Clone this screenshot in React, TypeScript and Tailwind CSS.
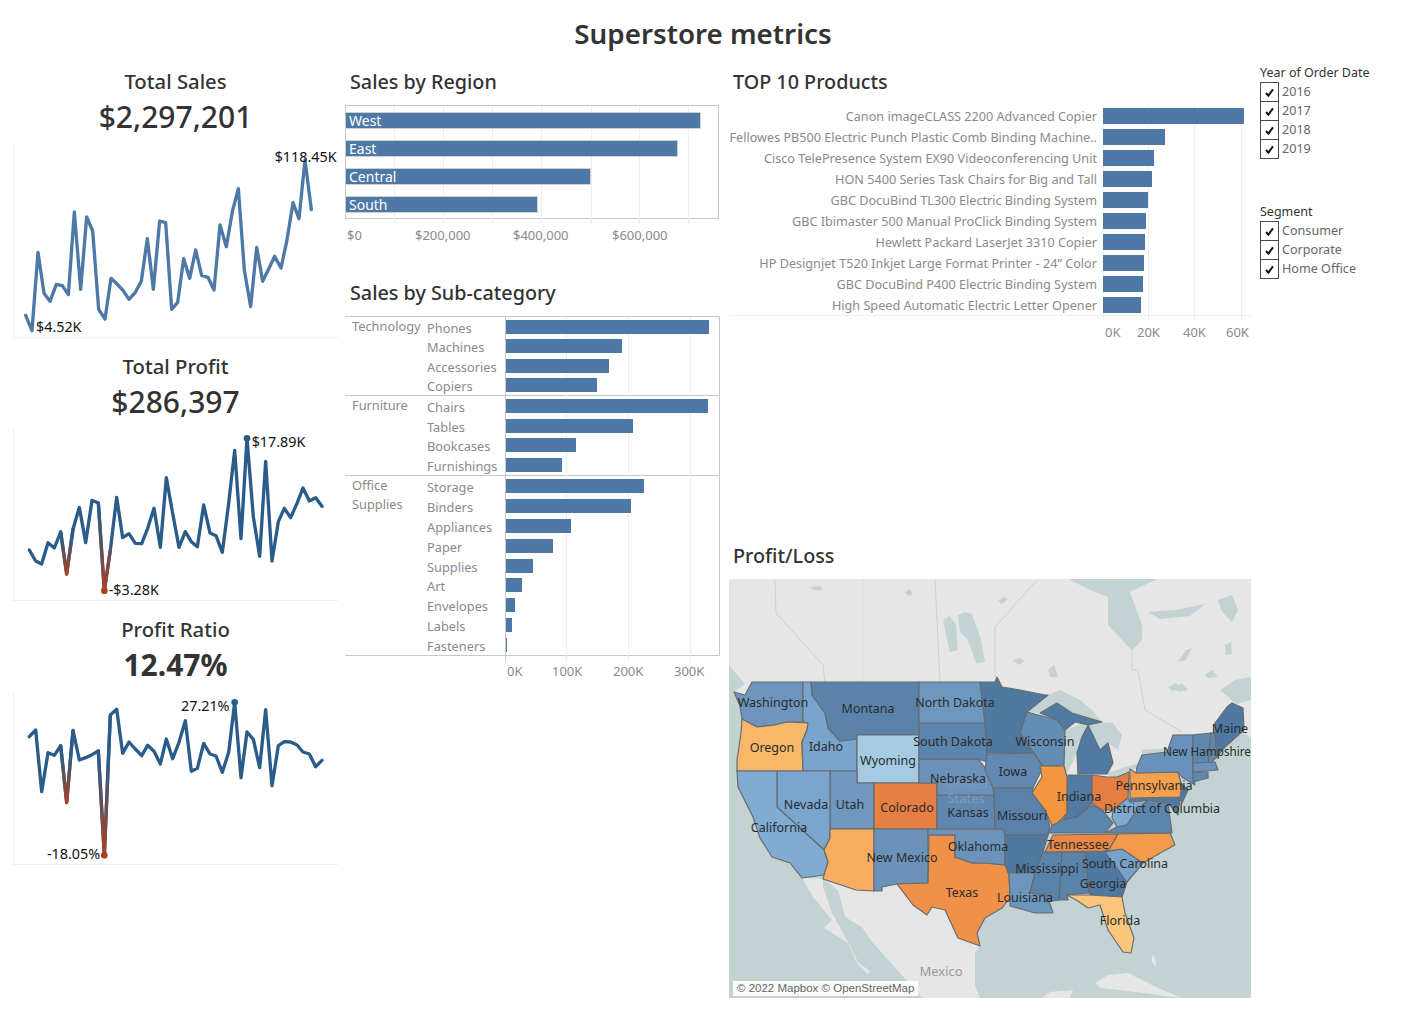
/*
 * Superstore metrics dashboard
 * KPI sparklines on the left, bar charts in the middle, top products + profit map on the right
 */

const FONT = "font-['Noto_Sans',sans-serif]";

const salesPts =
  "77,766 96,812 114,577 132,700 150,724 169,673 187,677 205,704 223,456 242,688 260,471 278,513 296,748 315,777 333,655 351,672 369,691 387,718 406,697 424,663 442,536 460,688 479,483 497,488 515,748 533,727 551,596 569,655 587,570 605,646 624,652 642,690 660,495 679,560 697,455 715,386 733,630 752,740 770,562 788,664 806,627 824,589 843,624 860,545 879,428 897,476 915,300 934,449";
const profitPts =
  "88,600 107,633 125,642 144,578 163,594 182,546 200,672 219,538 238,472 257,578 276,451 295,459 313,722 331,600 350,442 368,563 387,551 406,580 425,581 443,535 462,475 481,592 499,383 518,490 537,592 556,545 574,575 592,590 611,465 630,549 648,557 667,607 686,460 704,301 723,566 741,265 760,500 779,619 797,334 816,633 835,515 853,475 872,503 891,460 909,414 928,453 947,443 966,469";
const ratioPts =
  "88,380 107,360 125,545 144,428 163,436 182,407 200,578 219,361 238,450 257,443 276,434 295,423 313,736 331,315 350,298 368,430 387,396 406,417 425,437 443,406 462,424 481,462 499,387 518,446 537,397 556,332 574,484 592,475 611,400 630,432 648,438 667,487 686,427 704,277 723,503 741,366 760,388 779,473 797,299 816,527 835,407 853,395 872,396 891,405 909,426 928,432 947,470 966,451";

type Dip = { id: string; pts: string; top: number; bottom: number };
type Note = { x: number; y: number; text: string };
type Dot = { x: number; y: number; color: string };

function Sparkline(props: {
  top: number;
  height: number;
  pts: string;
  color: string;
  notes: Note[];
  dips?: Dip[];
  dots?: Dot[];
}) {
  return (
    <div className="w-[325px] border-b border-l border-[#f0f0f0]" style={{ height: props.height }}>
      <svg
        className="block overflow-visible"
        width="324"
        height={props.height - 1}
        viewBox={`42 ${props.top} 972 ${(props.height - 1) * 3}`}
      >
        <defs>
          {props.dips?.map((d) => (
            <linearGradient key={d.id} id={d.id} gradientUnits="userSpaceOnUse" x1="0" x2="0" y1={d.top} y2={d.bottom}>
              <stop offset="0" stopColor={props.color} />
              <stop offset="1" stopColor="#a9411f" />
            </linearGradient>
          ))}
        </defs>
        <polyline points={props.pts} fill="none" stroke={props.color} strokeWidth="10" strokeLinejoin="round" strokeLinecap="round" />
        {props.dips?.map((d) => (
          <polyline key={d.id} points={d.pts} fill="none" stroke={`url(#${d.id})`} strokeWidth="10" strokeLinejoin="round" strokeLinecap="round" />
        ))}
        {props.dots?.map((d) => (
          <circle key={d.x} cx={d.x} cy={d.y} r="10" fill={d.color} />
        ))}
        {props.notes.map((n) => (
          <text key={n.text} x={n.x} y={n.y} fontSize="43" fill="#111">
            {n.text}
          </text>
        ))}
      </svg>
    </div>
  );
}

function Kpi(props: { title: string; value: string; bold?: boolean; chartGap: string; children: React.ReactNode }) {
  return (
    <div className="mb-[13px] flex flex-col items-center">
      <div className="flex h-[32px] items-center pb-[2px] text-[20.3px] font-medium text-[#333]">{props.title}</div>
      <div className={`flex h-[36px] items-center text-[30px] text-[#333] ${props.bold ? "font-bold" : "font-medium"}`}>
        {props.value}
      </div>
      <div className={props.chartGap}>{props.children}</div>
    </div>
  );
}

const regions = [
  { name: "West", w: 355 },
  { name: "East", w: 332 },
  { name: "Central", w: 245 },
  { name: "South", w: 192 },
];

const regionGrid = ["left-[48px]", "left-[97px]", "left-[146px]", "left-[195px]", "left-[245px]", "left-[293px]", "left-[342px]"];

const subGroups = [
  {
    cat: "Technology",
    h: "h-[78px]",
    rows: [
      { name: "Phones", w: 203 },
      { name: "Machines", w: 116 },
      { name: "Accessories", w: 103 },
      { name: "Copiers", w: 91 },
    ],
  },
  {
    cat: "Furniture",
    h: "h-[79px]",
    rows: [
      { name: "Chairs", w: 202 },
      { name: "Tables", w: 127 },
      { name: "Bookcases", w: 70 },
      { name: "Furnishings", w: 56 },
    ],
  },
  {
    cat: "Office Supplies",
    h: "h-[179px]",
    rows: [
      { name: "Storage", w: 138 },
      { name: "Binders", w: 125 },
      { name: "Appliances", w: 65 },
      { name: "Paper", w: 47 },
      { name: "Supplies", w: 27 },
      { name: "Art", w: 16 },
      { name: "Envelopes", w: 9 },
      { name: "Labels", w: 6 },
      { name: "Fasteners", w: 1 },
    ],
  },
];

const products = [
  { name: "Canon imageCLASS 2200 Advanced Copier", w: 141 },
  { name: "Fellowes PB500 Electric Punch Plastic Comb Binding Machine..", w: 62 },
  { name: "Cisco TelePresence System EX90 Videoconferencing Unit", w: 51 },
  { name: "HON 5400 Series Task Chairs for Big and Tall", w: 49 },
  { name: "GBC DocuBind TL300 Electric Binding System", w: 45 },
  { name: "GBC Ibimaster 500 Manual ProClick Binding System", w: 43 },
  { name: "Hewlett Packard LaserJet 3310 Copier", w: 42 },
  { name: "HP Designjet T520 Inkjet Large Format Printer - 24” Color", w: 41 },
  { name: "GBC DocuBind P400 Electric Binding System", w: 40 },
  { name: "High Speed Automatic Electric Letter Opener", w: 38 },
];

function FilterList(props: { title: string; items: string[] }) {
  return (
    <div>
      <div className="flex h-[18px] items-center text-[12.5px] text-[#333]">{props.title}</div>
      {props.items.map((item) => (
        <div key={item} className="flex h-[19px] items-start gap-[3px]">
          <div className="flex h-[20px] w-[19px] items-center justify-center border-[1.5px] border-[#4a4a4a]">
            <svg width="11" height="11" viewBox="0 0 11 11">
              <path d="M2 6 L4.4 8.6 L9 2.4" fill="none" stroke="#111" strokeWidth="2" />
            </svg>
          </div>
          <span className="text-[12.6px] leading-[19px] text-[#666]">{item}</span>
        </div>
      ))}
    </div>
  );
}

type State = { name: string; fill: string; pts: string };

const states: State[] = [
  { name: "WA", fill: "#6d95be", pts: "752,682 803,682 803,722 787,722 775,725 757,727 742,719 740,706 734,692 745,695" },
  { name: "OR", fill: "#f9b769", pts: "742,719 757,727 775,725 787,722 808,723 807,730 802,742 803,771 737,771 737,760 741,733" },
  { name: "ID", fill: "#78a4cd", pts: "803,682 811,682 812,695 825,713 828,728 840,741 857,739 857,771 803,771 802,742 807,730 808,723 803,722" },
  { name: "MT", fill: "#5a82ab", pts: "811,682 919,682 919,735 857,735 857,739 840,741 828,728 825,713 812,695" },
  { name: "WY", fill: "#a4cbe2", pts: "857,735 919,735 919,783 857,783" },
  { name: "UT", fill: "#6f97bf", pts: "830,771 857,771 857,783 874,783 874,829 830,829" },
  { name: "CO", fill: "#e77f45", pts: "874,783 937,783 937,829 874,829" },
  { name: "NV", fill: "#7aa5cf", pts: "777,771 830,771 830,838 824,850 777,807" },
  { name: "CA", fill: "#80abd3", pts: "737,771 777,771 777,807 824,850 828,862 824,875 802,878 790,863 772,857 760,838 753,817 738,787" },
  { name: "AZ", fill: "#f8ad60", pts: "830,829 874,829 874,891 856,890 823,879 824,875 828,862 824,850 830,838" },
  { name: "NM", fill: "#6a92ba", pts: "874,829 928,829 928,883 897,884 882,887 882,891 874,891" },
  { name: "TX", fill: "#f0914a", pts: "929,835 955,835 955,857 972,863 985,863 1005,865 1009,873 1010,898 1002,908 985,918 977,933 980,946 958,938 945,910 932,907 927,915 913,905 897,884 928,883" },
  { name: "OK", fill: "#6b93bb", pts: "928,829 1005,829 1005,865 985,863 972,863 955,857 955,835 928,835" },
  { name: "KS", fill: "#5f87b0", pts: "937,795 994,795 995,829 937,829" },
  { name: "NE", fill: "#6a92ba", pts: "919,759 978,759 987,770 994,783 994,795 937,795 937,783 919,783" },
  { name: "SD", fill: "#5b84ae", pts: "919,723 985,723 987,753 987,762 978,759 919,759" },
  { name: "ND", fill: "#6e97c0", pts: "919,682 980,682 985,723 919,723" },
  { name: "MN", fill: "#4f799f", pts: "980,682 995,682 997,677 1002,687 1020,690 1045,695 1048,695 1027,712 1020,733 1034,753 987,753 985,723" },
  { name: "IA", fill: "#6189b2", pts: "987,754 1034,753 1043,767 1033,788 993,788 985,770" },
  { name: "WI", fill: "#648db6", pts: "1027,712 1057,720 1065,730 1064,765 1043,766 1034,753 1020,733" },
  { name: "MI1", fill: "#4f7aa3", pts: "1040,713 1057,703 1072,713 1102,722 1088,725 1075,722 1065,730 1057,720" },
  { name: "MI2", fill: "#4f7aa3", pts: "1088,725 1100,750 1108,743 1113,763 1107,774 1078,774 1077,753 1082,737" },
  { name: "IL", fill: "#f4953f", pts: "1040,766 1064,766 1067,777 1067,813 1053,828 1045,810 1032,793 1042,777" },
  { name: "IN", fill: "#517ba3", pts: "1068,775 1092,775 1092,803 1077,817 1063,820 1067,813" },
  { name: "OH", fill: "#e67e44", pts: "1092,775 1107,777 1117,777 1129,772 1128,798 1113,810 1102,810 1092,803" },
  { name: "MO", fill: "#5981aa", pts: "993,788 1033,788 1032,793 1045,810 1050,827 1048,835 1005,835 1003,829 995,829 994,795" },
  { name: "AR", fill: "#4f799f", pts: "1005,835 1048,835 1043,852 1035,873 1008,873 1005,863" },
  { name: "LA", fill: "#6d96bf", pts: "1009,873 1035,873 1030,893 1047,895 1053,913 1035,913 1010,906 1010,898" },
  { name: "MS", fill: "#5a83ac", pts: "1043,852 1062,852 1059,900 1045,902 1047,895 1030,893 1035,873" },
  { name: "AL", fill: "#5a83ac", pts: "1062,852 1085,852 1089,893 1067,895 1068,900 1059,900" },
  { name: "GA", fill: "#4f79a2", pts: "1085,852 1105,851 1127,882 1122,897 1090,895" },
  { name: "SC", fill: "#76a2cb", pts: "1105,852 1122,849 1143,863 1127,882" },
  { name: "FL", fill: "#fcc57c", pts: "1067,895 1090,895 1122,897 1125,913 1134,938 1131,953 1123,952 1108,930 1100,905 1088,908 1078,901" },
  { name: "TN", fill: "#ec8846", pts: "1053,835 1118,834 1110,848 1105,851 1045,852" },
  { name: "NC", fill: "#f49a4d", pts: "1118,834 1170,833 1175,845 1162,852 1143,863 1122,849 1105,851 1110,848" },
  { name: "KY", fill: "#5d86af", pts: "1048,833 1053,825 1063,820 1077,817 1092,805 1102,810 1113,823 1105,833" },
  { name: "WV", fill: "#7ea9d1", pts: "1113,810 1128,798 1130,802 1148,800 1135,813 1127,825 1117,827 1112,818" },
  { name: "VA", fill: "#5d86af", pts: "1105,833 1117,827 1127,825 1135,813 1148,800 1168,803 1172,833" },
  { name: "MD", fill: "#4f79a2", pts: "1130,799 1180,797 1178,815 1168,803 1148,800 1130,802" },
  { name: "NJ", fill: "#4f79a2", pts: "1180,782 1188,790 1182,803 1178,797" },
  { name: "PA", fill: "#f5a04f", pts: "1130,769 1136,773 1178,772 1182,787 1180,797 1130,798" },
  { name: "NY", fill: "#6892bb", pts: "1137,767 1142,755 1167,752 1173,735 1193,735 1193,773 1195,785 1182,777 1178,772 1136,773" },
  { name: "VT", fill: "#5f88b1", pts: "1193,735 1211,733 1208,765 1193,765" },
  { name: "NH", fill: "#5f88b1", pts: "1211,733 1215,733 1217,757 1208,765" },
  { name: "MA", fill: "#6892bb", pts: "1193,763 1215,762 1218,770 1193,772" },
  { name: "CT", fill: "#5f88b1", pts: "1193,772 1208,772 1208,778 1193,782" },
  { name: "ME", fill: "#4f79a2", pts: "1215,732 1215,723 1227,707 1232,703 1243,708 1244,730 1225,747 1217,757" },
];

const stateLabels: [string, number, number][] = [
  ["Washington", 773, 707],
  ["Montana", 868, 713],
  ["North Dakota", 955, 707],
  ["Oregon", 772, 752],
  ["Idaho", 826, 751],
  ["Wyoming", 888, 765],
  ["South Dakota", 953, 746],
  ["Wisconsin", 1045, 746],
  ["Maine", 1230, 733],
  ["New Hampshire", 1207, 756],
  ["Iowa", 1013, 776],
  ["Nebraska", 958, 783],
  ["Pennsylvania", 1154, 790],
  ["Indiana", 1079, 801],
  ["Nevada", 806, 809],
  ["Utah", 850, 809],
  ["Colorado", 907, 812],
  ["District of Columbia", 1162, 813],
  ["Kansas", 968, 817],
  ["Missouri", 1022, 820],
  ["California", 779, 832],
  ["Oklahoma", 978, 851],
  ["Tennessee", 1078, 849],
  ["New Mexico", 902, 862],
  ["South Carolina", 1125, 868],
  ["Mississippi", 1047, 873],
  ["Georgia", 1103, 888],
  ["Texas", 962, 897],
  ["Louisiana", 1025, 902],
  ["Florida", 1120, 925],
];

const waterShapes = [
  "1068,579 1157,579 1130,592 1142,625 1142,640 1132,650 1122,640 1108,625 1108,597 1090,590",
  "958,615 965,612 972,614 981,640 985,662 976,663 968,640 960,632",
  "943,620 950,616 956,625 958,650 950,652 946,635",
  "1148,612 1175,610 1205,604 1190,616 1160,619",
  "1218,600 1232,595 1238,610 1232,622 1222,612",
  "1178,662 1186,650 1192,648 1186,660",
  "1225,645 1231,642 1232,654 1226,655",
  "1048,670 1054,665 1058,677 1050,677",
  "1168,687 1176,683 1182,689 1172,691",
  "1205,675 1212,670 1218,677 1208,678",
  "1220,690 1235,680 1251,677 1251,700 1236,704",
  "905,592 910,589 913,594 908,596",
  "998,601 1004,597 1008,599 1002,604",
  "810,587 820,586 822,590 813,590",
  "1013,660 1020,658 1025,661 1019,665",
  "1175,688 1182,683 1188,690 1178,692",
  "1027,712 1048,695 1060,690 1080,700 1092,710 1102,722 1072,713 1057,703 1040,713",
  "1065,730 1087,722 1077,753 1067,773 1064,765",
  "1088,725 1102,722 1113,723 1122,735 1118,750 1108,743 1100,750",
  "1107,773 1142,762 1137,768 1112,778",
  "1142,750 1167,748 1165,753 1142,755",
];

function UsMap() {
  return (
    <div className="relative h-[419px] w-[522px] bg-[#c3d3d3]">
      <svg className="block" width="522" height="419" viewBox="729 579 522 419">
        {/* Canada */}
        <polygon
          points="729,579 1251,579 1251,738 1235,725 1215,732 1173,735 1167,752 1142,755 1136,773 1100,790 1000,800 757,727 734,692 745,684 729,665"
          fill="#e6e6e6"
        />
        {/* Mexico */}
        <polygon
          points="823,879 856,890 874,891 882,891 882,887 897,884 913,905 927,915 932,907 945,910 958,938 980,946 975,953 975,985 980,998 922,998 908,982 873,943 862,927 845,917 838,890"
          fill="#e6e6e6"
        />
        <polygon
          points="802,878 823,879 823,887 832,913 847,940 858,962 871,972 867,974 857,963 848,943 824,928 832,920 813,897"
          fill="#e6e6e6"
        />
        {/* Cuba, Bahamas and Yucatan */}
        <polygon points="1095,983 1108,975 1128,973 1158,988 1182,998 1120,990 1100,988" fill="#e6e6e6" />
        <polygon points="1042,998 1050,992 1073,990 1070,998" fill="#e6e6e6" />
        <polygon points="1152,955 1155,958 1156,967 1152,962" fill="#e6e6e6" />
        {waterShapes.map((pts) => (
          <polygon key={pts} points={pts} fill="#c3d3d3" />
        ))}
        {/* province lines */}
        <g fill="none" stroke="#cfcfcf" strokeWidth="1">
          <polyline points="775,580 776,613 805,645 823,665 825,682" />
          <polyline points="863,580 863,682" strokeDasharray="1 1" />
          <polyline points="935,580 940,682" />
          <polyline points="1037,580 995,627 995,678" />
          <polyline points="1132,648 1132,670 1138,670 1145,710 1182,732" />
        </g>
        {states.map((s) => (
          <polygon key={s.name} points={s.pts} fill={s.fill} stroke="#686b6e" strokeWidth="1.2" strokeLinejoin="round" />
        ))}
        <text x="967" y="788" textAnchor="middle" fontSize="13" fill="#7d9bbc">United</text>
        <text x="966" y="803" textAnchor="middle" fontSize="13" fill="#7d9bbc">States</text>
        {stateLabels.map(([name, x, y]) => (
          <text key={name} x={x} y={y} textAnchor="middle" fontSize={name === "New Hampshire" ? 11.7 : 12.5} fill="#2b2b2b">
            {name}
          </text>
        ))}
        <text x="941" y="976" textAnchor="middle" fontSize="13" fill="#999">Mexico</text>
      </svg>
      <div className="absolute bottom-[2px] left-[4px] bg-white/90 px-[4px] font-['Liberation_Sans',sans-serif] text-[11.5px] leading-[15px] text-[#666]">
        © 2022 Mapbox © OpenStreetMap
      </div>
    </div>
  );
}

export default function App() {
  return (
    <div className={`h-[1011px] w-[1406px] bg-white ${FONT}`}>
      <header className="flex h-[64px] items-start justify-center pt-[13px] text-[27.75px] leading-[40px] font-semibold text-[#333]">
        Superstore metrics
      </header>

      <div className="flex">
        {/* KPI column */}
        <div className="ml-[13px] w-[325px] pt-[2px]">
          <Kpi title="Total Sales" value="$2,297,201" chartGap="mt-[11px]">
            <Sparkline
              top={255}
              height={193}
              pts={salesPts}
              color="#4e79a7"
              notes={[
                { x: 824, y: 307, text: "$118.45K" },
                { x: 108, y: 816, text: "$4.52K" },
              ]}
            />
          </Kpi>
          <Kpi title="Total Profit" value="$286,397" chartGap="mt-[10px]">
            <Sparkline
              top={237}
              height={172}
              pts={profitPts}
              color="#2a5c8a"
              dips={[
                { id: "p1", pts: "182,546 200,672 219,538", top: 560, bottom: 672 },
                { id: "p2", pts: "295,459 313,722 331,600", top: 480, bottom: 722 },
              ]}
              dots={[
                { x: 741, y: 265, color: "#2a5c8a" },
                { x: 313, y: 722, color: "#a9411f" },
              ]}
              notes={[
                { x: 755, y: 291, text: "$17.89K" },
                { x: 326, y: 735, text: "-$3.28K" },
              ]}
            />
          </Kpi>
          <Kpi title="Profit Ratio" value="12.47%" bold chartGap="mt-[11px]">
            <Sparkline
              top={249}
              height={172}
              pts={ratioPts}
              color="#2a5c8a"
              dips={[
                { id: "r1", pts: "182,407 200,578 219,361", top: 430, bottom: 578 },
                { id: "r2", pts: "295,423 313,736 331,315", top: 440, bottom: 736 },
              ]}
              dots={[
                { x: 704, y: 277, color: "#2a5c8a" },
                { x: 313, y: 736, color: "#a9411f" },
              ]}
              notes={[
                { x: 543, y: 303, text: "27.21%" },
                { x: 141, y: 746, text: "-18.05%" },
              ]}
            />
          </Kpi>
        </div>

        {/* Region + sub-category */}
        <div className="ml-[7px] w-[375px] pt-[2px]">
          <h2 className="flex h-[32px] items-center pl-[5px] text-[19.75px] font-medium text-[#333]">Sales by Region</h2>
          <div className="relative mt-[7px] flex h-[114px] w-[374px] flex-col border border-[#c8c8c8]">
            {regionGrid.map((cls) => (
              <div key={cls} className={`absolute top-0 -bottom-[6px] w-px bg-[#eeeeee] ${cls}`} />
            ))}
            {regions.map((r) => (
              <div key={r.name} className="relative flex flex-1 items-center">
                <div
                  className="flex h-[17px] items-center border border-l-0 border-[#d0d0d0] bg-[#4e79a7] pl-[3px] text-[14px] text-white"
                  style={{ width: r.w }}
                >
                  {r.name}
                </div>
              </div>
            ))}
          </div>
          <div className="mt-[8px] flex h-[18px] items-center pl-[2px] text-[13px] text-[#8a8a8a]">
            <span className="w-[68px]">$0</span>
            <span className="w-[98px]">$200,000</span>
            <span className="w-[99px]">$400,000</span>
            <span>$600,000</span>
          </div>

          <h2 className="mt-[32px] flex h-[32px] items-center pl-[5px] text-[19.75px] font-medium text-[#333]">
            Sales by Sub-category
          </h2>
          <div className="relative mt-[7px] border-t border-r border-[#c8c8c8]">
            <div className="absolute top-0 -bottom-[6px] left-[221px] w-px bg-[#eeeeee]" />
            <div className="absolute top-0 -bottom-[6px] left-[283px] w-px bg-[#eeeeee]" />
            <div className="absolute top-0 -bottom-[6px] left-[345px] w-px bg-[#eeeeee]" />
            <div className="absolute top-0 -bottom-[6px] left-[160px] w-px bg-[#c8c8c8]" />
            {subGroups.map((g) => (
              <div key={g.cat} className="box-content flex border-b border-[#c8c8c8]">
                <div className="w-[82px] pr-[10px] pl-[7px] text-[12.8px] leading-[19px] text-[#8a8a8a]">{g.cat}</div>
                <div className={`relative flex flex-1 flex-col ${g.h}`}>
                  {g.rows.map((row) => (
                    <div key={row.name} className="flex min-h-0 flex-1 items-center">
                      <span className="w-[79px] translate-y-px text-[12.8px] leading-[14px] text-[#8a8a8a]">{row.name}</span>
                      <div className="h-[14px] bg-[#4e79a7]" style={{ width: row.w }} />
                    </div>
                  ))}
                </div>
              </div>
            ))}
          </div>
          <div className="mt-[7px] flex h-[18px] items-center pl-[162px] text-[13px] text-[#8a8a8a]">
            <span className="w-[45px]">0K</span>
            <span className="w-[61px]">100K</span>
            <span className="w-[61px]">200K</span>
            <span>300K</span>
          </div>
        </div>

        {/* Top products + map */}
        <div className="ml-[9px] w-[522px] pt-[2px]">
          <h2 className="flex h-[32px] items-center pl-[4px] text-[19.75px] font-medium text-[#333]">TOP 10 Products</h2>
          <div className="relative mt-[7px] border-b border-[#eeeeee]">
            <div className="absolute top-0 -bottom-[6px] left-[374px] w-px bg-[#eeeeee]" />
            <div className="absolute top-0 -bottom-[6px] left-[419px] w-px bg-[#eeeeee]" />
            <div className="absolute top-0 -bottom-[6px] left-[465px] w-px bg-[#eeeeee]" />
            <div className="absolute top-0 -bottom-[6px] left-[512px] w-px bg-[#eeeeee]" />
            {products.map((p) => (
              <div key={p.name} className="relative flex h-[21px] items-center">
                <span className="w-[368px] pt-[1px] text-right text-[12.65px] whitespace-nowrap text-[#8a8a8a]">{p.name}</span>
                <div className="ml-[6px] h-[16px] bg-[#4e79a7]" style={{ width: p.w }} />
              </div>
            ))}
          </div>
          <div className="mt-[8px] flex h-[18px] items-center pl-[376px] text-[13px] text-[#8a8a8a]">
            <span className="w-[32px]">0K</span>
            <span className="w-[46px]">20K</span>
            <span className="w-[43px]">40K</span>
            <span>60K</span>
          </div>
          <h2 className="mt-[198px] flex h-[32px] items-center pl-[4px] text-[19.75px] font-medium text-[#333]">Profit/Loss</h2>
          <div className="mt-[7px]">
            <UsMap />
          </div>
        </div>

        {/* Filters */}
        <div className="ml-[9px] flex flex-col gap-[45px]">
          <FilterList title="Year of Order Date" items={["2016", "2017", "2018", "2019"]} />
          <FilterList title="Segment" items={["Consumer", "Corporate", "Home Office"]} />
        </div>
      </div>
    </div>
  );
}
